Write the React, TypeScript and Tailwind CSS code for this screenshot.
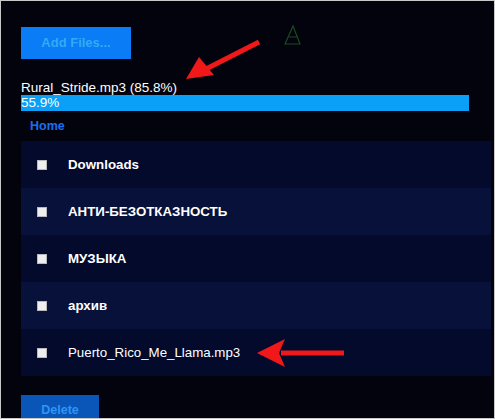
import React from "react";

const rows = [
  { name: "Downloads", bold: true, light: false },
  { name: "АНТИ-БЕЗОТКАЗНОСТЬ", bold: true, light: true },
  { name: "МУЗЫКА", bold: true, light: false },
  { name: "архив", bold: true, light: true },
  { name: "Puerto_Rico_Me_Llama.mp3", bold: false, light: false },
];

export default function App() {
  return (
    <div
      className="relative w-[495px] h-[419px] overflow-hidden bg-[#03030e] border border-[#c8c8c8]"
      style={{ fontFamily: '"Liberation Sans", Arial, sans-serif' }}
    >
      <div className="pl-[20px] pr-[4px] pt-[26px]">
        <button className="w-[110px] h-[32px] bg-[#0a7cf6] text-[#33aaf5] text-[13px] font-bold">
          Add Files...
        </button>
        <div className="mt-[21px] text-white text-[13.5px] leading-[15px]">Rural_Stride.mp3 (85.8%)</div>
        <div className="w-[448px] h-[16px] bg-[#0aa0f8] text-white text-[13.5px] leading-[16px]">55.9%</div>
        <div className="pl-[9px] pt-[8px] h-[30px] text-[#1a6ef0] text-[12.5px] font-bold leading-[14px]">Home</div>
        <div className="w-[470px]">
          {rows.map((r) => (
            <div
              key={r.name}
              className={`h-[47px] flex items-center ${r.light ? "bg-[#07113a]" : "bg-[#030a2c]"}`}
            >
              <div className="ml-[16px] w-[10px] h-[10px] bg-[#eeeeee] border border-[#b8b8c0]" />
              <div
                className={`ml-[21px] text-white text-[13.3px] ${r.bold ? "font-bold" : "font-normal"}`}
              >
                {r.name}
              </div>
            </div>
          ))}
        </div>
        <button className="mt-[19px] w-[78px] h-[30px] bg-[#0a55b8] text-[#2e95f5] text-[12.5px] font-bold">
          Delete
        </button>
      </div>

      <svg className="absolute left-0 top-0" width="495" height="419" viewBox="0 0 495 419">
        <path d="M284 43 L292 25 L299 43 Z M288 36 L296 36" fill="none" stroke="#1d4a22" strokeWidth="1.2" />
        <line x1="258" y1="41" x2="205" y2="68" stroke="#f01818" strokeWidth="5" />
        <polygon points="185,78 198,56 213,74" fill="#f01818" />
        <line x1="343" y1="352" x2="280" y2="352" stroke="#f01818" strokeWidth="5" />
        <polygon points="256,352 284,338 278,352 284,366" fill="#f01818" />
      </svg>
    </div>
  );
}
